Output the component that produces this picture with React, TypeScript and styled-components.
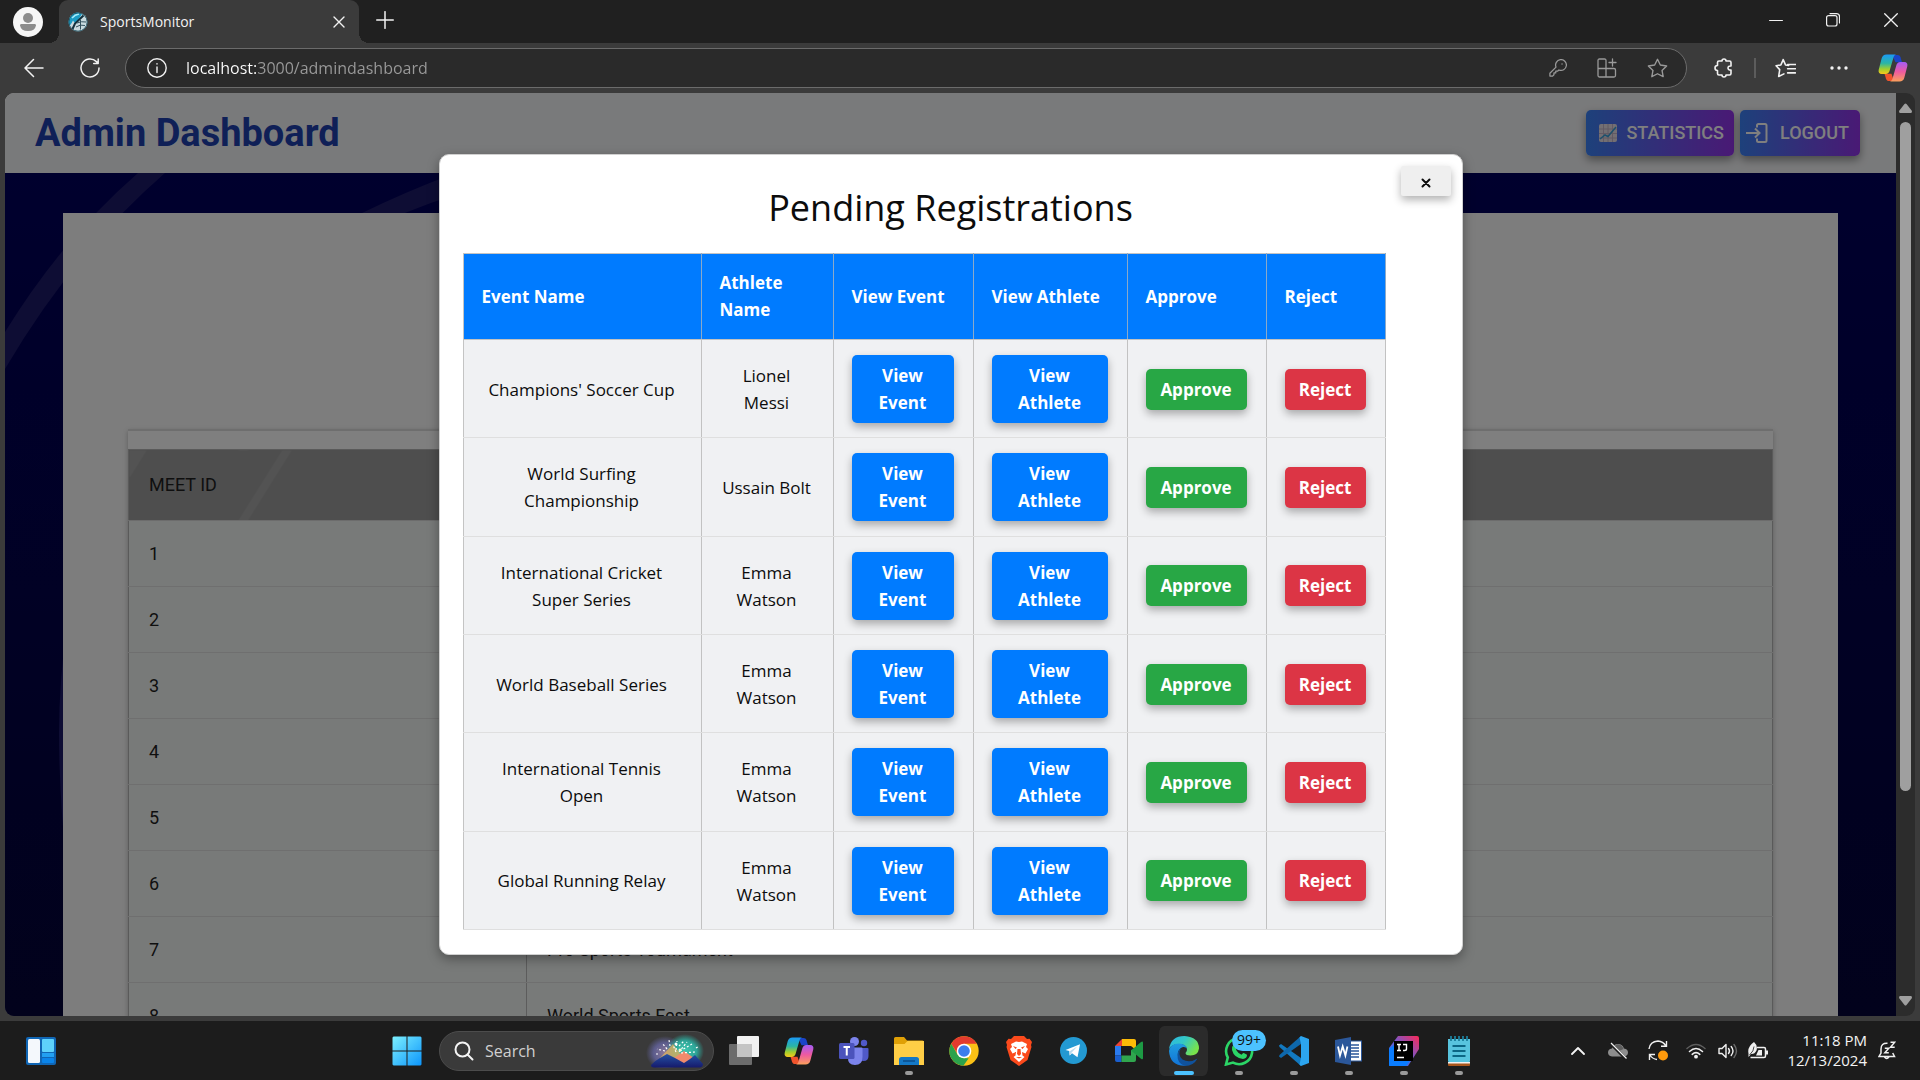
import React from "react";
import styled, { createGlobalStyle, css } from "styled-components";

const GlobalStyle = createGlobalStyle`
  *, *::before, *::after { box-sizing: border-box; }
  html, body { margin: 0; padding: 0; }
  body { background: #1c1c1c; overflow: hidden; }
  button, input { font: inherit; color: inherit; }
  svg { display: block; flex: none; }
`;

const ui = `"Open Sans", "Noto Sans", sans-serif`;
const web = `Roboto, "Liberation Sans", sans-serif`;

/* ---------- window ---------- */

const Screen = styled.div`
  display: flex;
  flex-direction: column;
  height: 100vh;
  background: #3b3b3b;
  font-family: ${ui};
`;

const bareButton = css`
  display: inline-flex;
  align-items: center;
  justify-content: center;
  padding: 0;
  border: 0;
  background: transparent;
  color: inherit;
`;

const IconButton = styled.button<{ $w?: number }>`
  ${bareButton}
  width: ${(p) => p.$w ?? 40}px;
  height: 40px;
  flex: none;
`;

const TabStrip = styled.header`
  display: flex;
  height: 43px;
  flex: none;
  background: #202020;
  color: #f2f2f2;
`;

const Profile = styled.button`
  ${bareButton}
  width: 59px;
  padding-right: 3px;
`;

const Tab = styled.div`
  position: relative;
  display: flex;
  align-items: center;
  width: 300px;
  padding: 0 0 0 9px;
  border-radius: 9px 9px 0 0;
  background: #3b3b3b;
  font-size: 14px;
  line-height: 20px;

  &::before,
  &::after {
    content: "";
    position: absolute;
    bottom: 0;
    width: 10px;
    height: 10px;
  }
  &::before {
    left: -10px;
    background: radial-gradient(circle at 0 0, transparent 10px, #3b3b3b 10px);
  }
  &::after {
    right: -10px;
    background: radial-gradient(circle at 100% 0, transparent 10px, #3b3b3b 10px);
  }
`;

const TabTitle = styled.span`
  flex: 1;
  margin-left: 12px;
`;

const WindowControls = styled.div`
  display: flex;
  margin-left: auto;
`;

const Toolbar = styled.nav`
  display: flex;
  align-items: center;
  height: 50px;
  flex: none;
  padding: 0 7px 0 6px;
  color: #f2f2f2;
`;

const AddressBar = styled.label`
  display: flex;
  align-items: center;
  flex: 1;
  height: 40px;
  margin: 0 15px 0 7px;
  padding: 0 4px 0 11px;
  border: 1px solid #6b6b6b;
  border-radius: 20px;
  background: #2a2a2a;
  color: #9a9a9a;
`;

const AddressInput = styled.input`
  flex: 1;
  min-width: 0;
  margin-left: 9px;
  padding: 0;
  border: 0;
  outline: 0;
  font-size: 16px;
  line-height: 24px;
  color: transparent;
  background: linear-gradient(to right, #ffffff 71px, #9a9a9a 71px);
  background-clip: text;
  -webkit-background-clip: text;
`;

const ToolDivider = styled.span`
  width: 2px;
  height: 20px;
  margin: 0 9px 0 8px;
  background: #5c5c5c;
`;

/* ---------- page ---------- */

const Frame = styled.div`
  display: flex;
  flex: 1;
  min-height: 0;
  margin: 0 5px 5px;
  border-radius: 9px;
  overflow: hidden;
`;

const Viewport = styled.div`
  position: relative;
  flex: 1;
  min-width: 0;
  overflow: hidden;
  font-family: ${web};
`;

const PageHeader = styled.div`
  display: flex;
  align-items: center;
  justify-content: space-between;
  height: 80px;
  padding: 0 36px 0 30px;
  background: #f3f4f6;
`;

const PageTitle = styled.h1`
  margin: 0;
  font-size: 38px;
  line-height: 40px;
  font-weight: 700;
  color: #1e40af;
`;

const HeaderActions = styled.div`
  display: flex;
  gap: 6px;
`;

const GradientButton = styled.button<{ $icon: "small" | "large" }>`
  ${bareButton}
  gap: ${(p) => (p.$icon === "large" ? 12 : 9)}px;
  height: 46px;
  padding: ${(p) => (p.$icon === "large" ? "0 11px 0 6px" : "0 10px 0 13px")};
  border-radius: 5px;
  background: linear-gradient(to right, #3b82f6, #9333ea);
  box-shadow: 0 4px 8px rgba(0, 0, 0, 0.4);
  color: #fff;
  font-size: 18px;
  font-weight: 500;
  line-height: 24px;
`;

const Stage = styled.main`
  position: relative;
  padding: 40px 58px 0;
  background: linear-gradient(#00005c, #040438 840px);
`;

const Arcs = styled.svg`
  position: absolute;
  top: 0;
  left: 0;
`;

const Panel = styled.section`
  position: relative;
  padding: 216px 65px 0;
  background: #fafafa;
`;

const Sheet = styled.div`
  padding-top: 18px;
  border-top: 2px solid #dcdcdc;
  background: #fff;
  box-shadow: 0 2px 5px rgba(0, 0, 0, 0.25);
`;

const MeetTable = styled.table`
  width: 100%;
  table-layout: fixed;
  border-collapse: collapse;
  border: 1px solid #b4b4b4;
  color: #1f1f1f;
  font-size: 18px;
  line-height: 27px;
  text-align: left;

  th, td { padding: 0 20px; }
  th {
    height: 71px;
    padding-bottom: 2px;
    border-bottom: 1px solid #d8d8d8;
    font-weight: 400;
    background: #9c9c9c;
  }
  th:first-child {
    width: 398px;
    background: linear-gradient(
      122deg,
      #a7a7a7 14px,
      #9c9c9c 15px 129px,
      #a7a7a7 130px 137px,
      #9c9c9c 138px
    );
  }
  td {
    height: 66px;
    background: #f1f4f3;
    border-bottom: 1px solid #dedede;
  }
  td + td { border-left: 1px solid #b8b8b8; }
`;

const ScrollTrack = styled.div`
  display: flex;
  flex-direction: column;
  align-items: center;
  width: 19px;
  flex: none;
  padding: 10px 0;
  background: #2c2c2c;
`;

const ScrollLane = styled.div`
  flex: 1;
  width: 11px;
  margin: 9px 0 5px;
`;

const ScrollThumb = styled.div`
  height: 77%;
  border-radius: 6px;
  background: #9f9f9f;
`;

/* ---------- modal ---------- */

const Backdrop = styled.div`
  position: absolute;
  inset: 0;
  display: flex;
  align-items: center;
  justify-content: center;
  background: rgba(0, 0, 0, 0.5);
  font-family: ${ui};
`;

const Dialog = styled.div`
  position: relative;
  display: flex;
  flex-direction: column;
  width: min(1024px, 90%);
  max-height: calc(100% - 122px);
  padding: 24px 23px;
  border: 1px solid #d0d0d0;
  border-radius: 10px;
  background: #fff;
  box-shadow: 0 4px 12px rgba(0, 0, 0, 0.35);
  color: #0c0c0c;
`;

const CloseButton = styled.button`
  ${bareButton}
  position: absolute;
  top: 11px;
  right: 11px;
  width: 50px;
  height: 30px;
  padding-top: 4px;
  border-radius: 2px;
  background: #efefef;
  box-shadow: 0 4px 8px rgba(0, 0, 0, 0.3);
`;

const DialogTitle = styled.h2`
  margin: 0 0 16px;
  font-size: 36px;
  line-height: 58px;
  font-weight: 400;
  text-align: center;
`;

const TableScroll = styled.div`
  overflow: hidden;
`;

const RegTable = styled.table`
  width: 922px;
  height: 677px;
  table-layout: fixed;
  border-collapse: collapse;
  border: 1px solid #c4c4c4;
  font-size: 17px;
  line-height: 27px;

  th, td { border-right: 1px solid #c2c2c2; }
  th {
    padding: 15px 18px 16px;
    background: #007bff;
    color: #fff;
    font-weight: 700;
    text-align: left;
    border-right-color: #8aa9c9;
    border-bottom: 1px solid #c2c2c2;
  }
  td {
    padding: 15px 19px 14px 18px;
    background: #f0f1f3;
    text-align: center;
    border-bottom: 1px solid #dfdfdf;
  }
`;

const tones = { blue: "#007bff", green: "#28a745", red: "#dc3545" };

const ActionButton = styled.button<{ $tone: keyof typeof tones }>`
  display: block;
  width: 100%;
  padding: 7px 12px;
  border: 0;
  border-radius: 5px;
  background: ${(p) => tones[p.$tone]};
  box-shadow: 0 4px 8px rgba(0, 0, 0, 0.3);
  color: #fff;
  font-weight: 700;
  line-height: 27px;
`;

/* ---------- taskbar ---------- */

const Taskbar = styled.footer`
  display: grid;
  grid-template-columns: 1fr auto 1fr;
  align-items: center;
  height: 59px;
  flex: none;
  background: #1c1c1c;
  color: #f4f4f4;
`;

const TaskLeft = styled.div`
  padding-left: 21px;
`;

const TaskCenter = styled.div`
  display: flex;
  align-items: center;
  padding-right: 55px;
`;

const TaskButton = styled.button<{ $state?: "open" | "active" }>`
  ${bareButton}
  position: relative;
  width: 55px;
  height: 50px;
  border: 3px solid transparent;
  border-width: 0 3px;
  border-radius: 8px;
  background-clip: padding-box;
  ${(p) => p.$state === "active" && css`background-color: #2b2b2b;`}
  ${(p) =>
    p.$state &&
    css`
      &::after {
        content: "";
        position: absolute;
        bottom: 1px;
        left: 50%;
        width: ${p.$state === "active" ? 20 : 8}px;
        height: 4px;
        border-radius: 2px;
        background: ${p.$state === "active" ? "#4cc2ff" : "#9a9a9a"};
        transform: translateX(-50%);
      }
    `}
`;

const SearchBox = styled.label`
  display: flex;
  align-items: center;
  width: 275px;
  height: 40px;
  margin: 0 2px 0 5px;
  padding: 0 9px 0 14px;
  border: 1px solid #4c4c4c;
  border-radius: 20px;
  background: #3a3a3a;
`;

const SearchInput = styled.input`
  flex: 1;
  min-width: 0;
  margin-left: 11px;
  padding: 0;
  border: 0;
  outline: 0;
  background: transparent;
  font-size: 16px;
  line-height: 24px;
  &::placeholder { color: #d0d0d0; opacity: 1; }
`;

const Badge = styled.span`
  position: absolute;
  top: 4px;
  left: 18px;
  width: 34px;
  height: 21px;
  border-radius: 11px;
  background: #4cc2ff;
  color: #101010;
  font-size: 14px;
  line-height: 20px;
  text-align: center;
`;

const Tray = styled.div`
  display: flex;
  align-items: center;
  justify-content: flex-end;
  padding-right: 21px;
`;

const TrayButton = styled.button<{ $w: number }>`
  ${bareButton}
  width: ${(p) => p.$w}px;
  height: 40px;
  flex: none;
`;

const Clock = styled.time`
  margin: 0 8px 0 12px;
  padding-bottom: 2px;
  font-size: 15px;
  line-height: 20px;
  text-align: right;
  white-space: nowrap;
`;

/* ---------- drawings ---------- */

type LineProps = { size?: number; w?: number; children: React.ReactNode; box?: number };
const Line = ({ size = 20, w = 1.4, box = 20, children }: LineProps) => (
  <svg width={size} height={size} viewBox={`0 0 ${box} ${box}`} fill="none" stroke="currentColor" strokeWidth={w} strokeLinecap="round" strokeLinejoin="round" aria-hidden="true">
    {children}
  </svg>
);

const Copilot = ({ id }: { id: string }) => (
  <svg width="30" height="30" viewBox="0 0 30 30" aria-hidden="true">
    <defs>
      <linearGradient id={id + "a"} x1="0" y1="0" x2="0" y2="1">
        <stop offset="0" stopColor="#1b9af5" /><stop offset=".45" stopColor="#2bb5a5" />
        <stop offset=".75" stopColor="#a3cf2c" /><stop offset="1" stopColor="#f8c81c" />
      </linearGradient>
      <linearGradient id={id + "b"} x1="0" y1="0" x2="0" y2="1">
        <stop offset="0" stopColor="#a45cf5" /><stop offset=".5" stopColor="#ee5aa0" /><stop offset="1" stopColor="#fba05c" />
      </linearGradient>
    </defs>
    <path d="M14 2h5.500c1.500 0 2.500.9 3 2.300l1.500 5h-6.500z" fill="#1a44c8" />
    <path d="M16 28h-5c-1.500 0-2.500-.9-3-2.300l-1.500-5h7z" fill="#f0542c" />
    <path d="M8.500 1.500h9.500c-1.500.5-2.200 1.800-2.700 3.600l-3.600 12.400c-.6 2.200-1.900 3.500-4 3.500h-4c-2.400 0-3.600-1.800-3-4.200l3-11.500c.7-2.500 2.200-3.800 4.800-3.800z" fill={`url(#${id}a)`} />
    <path d="M21.500 28.500h-9.500c1.500-.5 2.200-1.800 2.700-3.600l3.600-12.400c.6-2.200 1.900-3.500 4-3.500h4c2.400 0 3.600 1.800 3 4.200l-3 11.500c-.7 2.500-2.200 3.800-4.800 3.800z" fill={`url(#${id}b)`} />
  </svg>
);

const Favicon = () => (
  <svg width="20" height="20" viewBox="0 0 20 20" aria-hidden="true">
    <circle cx="10" cy="10" r="9.500" fill="#c9dade" />
    <path d="M10 .5A9.500 9.500 0 0 0 1.500 14Q4 11 5 8.500L7.500 12 14 2z" fill="#1d9cc4" />
    <path d="M4 6q3-3.500 7-4" stroke="#a6ecfb" strokeWidth="1.500" fill="none" />
    <path d="M4.500 17L7 11.500 15.500 3.500" stroke="#12303c" strokeWidth="2" fill="none" />
    <path d="M9 11q4-2 9-1M8 15q4-3 9-1.500M12.500 8v9.500" stroke="#34525e" strokeWidth="1" fill="none" />
    <circle cx="10" cy="10" r="9.200" fill="none" stroke="#18495a" strokeWidth=".9" />
  </svg>
);

const ChartIcon = () => (
  <svg width="18" height="18" viewBox="0 0 18 18" aria-hidden="true">
    <rect width="18" height="18" rx="2" fill="#e6dfe6" />
    <path d="M0 5h18M0 9.500h18M0 14h18M4.500 0v18M9 0v18M13.500 0v18" stroke="#c0b0c4" strokeWidth=".9" />
    <path d="M1 15l5-4 3 1.500L17 3" stroke="#3aa0d8" strokeWidth="1.500" fill="none" />
  </svg>
);

const LoginIcon = () => (
  <svg width="22" height="22" viewBox="0 0 22 22" fill="none" stroke="currentColor" strokeWidth="2" aria-hidden="true">
    <path d="M11 5.500V3.500q0-1.500 1.500-1.500H19q1.500 0 1.500 1.500v15q0 1.500-1.500 1.500h-6.500q-1.500 0-1.500-1.500v-2" />
    <path d="M0 11h13.500M9 6.500l4.500 4.500L9 15.500" />
  </svg>
);

const WidgetsIcon = () => (
  <svg width="30" height="28" viewBox="0 0 30 28" aria-hidden="true">
    <rect width="30" height="28" rx="2" fill="#1066b5" />
    <rect x="2" y="2" width="12" height="24" rx="1.500" fill="#f4f8fc" />
    <rect x="16" y="2" width="12" height="13" rx="1" fill="#5ed2fb" />
    <rect x="16" y="16" width="12" height="4" fill="#22a0f2" />
    <rect x="16" y="21" width="12" height="5" rx="1" fill="#0a84ea" />
  </svg>
);

const StartIcon = () => (
  <svg width="30" height="30" viewBox="0 0 30 30" aria-hidden="true">
    <defs>
      <linearGradient id="win" x1="0" y1="0" x2="1" y2="1">
        <stop offset="0" stopColor="#7cf0ff" /><stop offset="1" stopColor="#0c95fb" />
      </linearGradient>
    </defs>
    <path fill="url(#win)" d="M1.500.5H14.500V14.500H.5V1.500zM15.500.5H28.500l1 1V14.500H15.500zM.5 15.500H14.500V29.500H1.500l-1-1zM15.500 15.500H29.500V28.500l-1 1H15.500z" />
  </svg>
);

const SearchArt = () => (
  <svg width="58" height="34" viewBox="0 0 58 34" aria-hidden="true">
    <defs>
      <radialGradient id="g1"><stop offset="0" stopColor="#8d7a9c" /><stop offset=".6" stopColor="#5c5c8c" /><stop offset="1" stopColor="#5c5c8c" stopOpacity="0" /></radialGradient>
      <radialGradient id="g2"><stop offset="0" stopColor="#3fc7b0" /><stop offset=".6" stopColor="#2ea598" /><stop offset="1" stopColor="#2ea598" stopOpacity="0" /></radialGradient>
      <linearGradient id="g3" x1="0" y1="0" x2="0" y2="1"><stop offset="0" stopColor="#2452a4" /><stop offset="1" stopColor="#161a6c" /></linearGradient>
    </defs>
    <ellipse cx="19" cy="19" rx="19" ry="17" fill="url(#g1)" />
    <ellipse cx="39" cy="17" rx="19" ry="17" fill="url(#g2)" />
    <path d="M14 24l13-14 12 16z" fill="#d9b060" opacity=".8" />
    <path d="M28 24l10-7 10 7-10 8z" fill="#f08a6c" />
    <path d="M5 31q5-5 9-7l7-4 8 4 9 5 6-4 5-4 8 9q0 3-3 3.500H8q-3 0-3-2.500z" fill="url(#g3)" />
    <path d="M21 15l-5-6M19 17l-8-2M24 12l-1-6M30 16l1-9M33 12l5-5M34 17l12-7M35 19l14-1M30 18l-3-7M33 18l8-10M12 20h-3M50 14l3-2" stroke="#fff" strokeWidth="1.200" strokeDasharray="2 2" />
    <circle cx="30" cy="10" r="1.500" fill="#fff" /><circle cx="34" cy="16" r="1.500" fill="#fff8d0" />
  </svg>
);

const TaskViewIcon = () => (
  <svg width="30" height="30" viewBox="0 0 30 30" aria-hidden="true">
    <rect x="0" y="8" width="23" height="21" rx="1" fill="#6c6c6c" />
    <rect x="8" y="0" width="22" height="21" rx="1" fill="#f2f2f2" />
    <rect x="8" y="8" width="15" height="13" fill="#c4c4c4" />
  </svg>
);

const TeamsIcon = () => (
  <svg width="30" height="28" viewBox="0 0 30 28" aria-hidden="true">
    <circle cx="25" cy="6" r="3.200" fill="#5059c9" /><circle cx="15.500" cy="4.500" r="4.500" fill="#7b83eb" />
    <path d="M21 11h7.500q1 0 1 1v7q0 5-5 5-2 0-3.500-1z" fill="#5059c9" />
    <path d="M9 10.500h13.500q1 0 1 1V20q0 8-7.500 8t-7-8z" fill="#7b83eb" />
    <rect y="6" width="15.500" height="16" rx="1.500" fill="#4b53bc" />
    <path d="M4.500 10h6.500M7.750 10v8.500" stroke="#fff" strokeWidth="2" />
  </svg>
);

const FolderIcon = () => (
  <svg width="30" height="28" viewBox="0 0 30 28" aria-hidden="true">
    <path d="M0 1.500Q0 0 1.500 0H10l3 3.500h15.500Q30 3.500 30 5v8H0z" fill="#e0a006" />
    <path d="M0 7h10.500L13.500 4H30v24H0z" fill="#ffce46" />
    <path d="M5 28v-5.500Q5 20 7.500 20h15q2.500 0 2.500 2.500V28z" fill="#1478c6" />
    <path d="M9 24h12" stroke="#0a4c8a" strokeWidth="1.500" />
  </svg>
);

const ChromeIcon = () => (
  <svg width="30" height="30" viewBox="0 0 48 48" aria-hidden="true">
    <circle cx="24" cy="24" r="23.500" fill="#fbc116" />
    <path d="M3.600 12.300A23.500 23.500 0 0 1 44.400 12.300H24L13 27z" fill="#e33b2e" />
    <path d="M3.600 12.300L13.800 30 24 35.700h7.500L23 47.500A23.500 23.500 0 0 1 3.600 12.300z" fill="#2ba24c" />
    <circle cx="24" cy="24" r="11.700" fill="#fff" /><circle cx="24" cy="24" r="9.300" fill="#3b7ded" />
  </svg>
);

const BraveIcon = () => (
  <svg width="26" height="30" viewBox="0 0 26 30" aria-hidden="true">
    <path d="M8 0h10l3 3 2.500-.3L26 6l-1 3 .5 2-4 13-8.500 6-8.500-6L.5 11 1 9 0 6l2.500-3.300L5 3z" fill="#fb4a1c" />
    <path d="M13 6l3-.6 5 2.600-1 3 2 2-2.500 4.500L16 16l.5 3.500 2 1.500-5.500 5-5.500-5 2-1.500L10 16l-3.500 1.500L4 13l2-2-1-3 5-2.600z" fill="#fff" />
    <path d="M7 10l4 1.500-1.500 1.500zM19 10l-4 1.500 1.500 1.500zM11.500 13h3l.5 5-2 2-2-2zM10 21l3 1.500 3-1.500" fill="#fb4a1c" />
  </svg>
);

const TelegramIcon = () => (
  <svg width="27" height="27" viewBox="0 0 27 27" aria-hidden="true">
    <circle cx="13.500" cy="13.500" r="13.500" fill="#2399d2" />
    <path d="M5.500 13L20 7.300l-2.500 13-5.500-4-2.300 2.200-.5-4.500z" fill="#fff" />
    <path d="M9.300 14.500l8-5-5.600 6-2 3z" fill="#b9dbee" />
  </svg>
);

const MeetIcon = () => (
  <svg width="28" height="23" viewBox="0 0 28 23" aria-hidden="true">
    <path d="M0 7l7-7v7z" fill="#e94335" /><path d="M7 0h12q2 0 2 2v9l-5-4H7z" fill="#fcbc07" />
    <path d="M0 7h6v9.500H0z" fill="#2a7bf0" /><path d="M0 16.500h6.500V23H2q-2 0-2-2z" fill="#1a5fd0" />
    <path d="M6.500 16.500H16V11l5-1v11q0 2-2 2H6.500z" fill="#30a64e" />
    <path d="M16 11.500l10-8.500q2-1.300 2 .8V19q0 2.200-2 .8z" fill="#1d9a44" />
  </svg>
);

const EdgeIcon = () => (
  <svg width="30" height="30" viewBox="0 0 30 30" aria-hidden="true">
    <defs>
      <linearGradient id="e1" x1="0" y1="0" x2="1" y2=".5"><stop offset="0" stopColor="#2ab4e8" /><stop offset=".5" stopColor="#34c8c4" /><stop offset="1" stopColor="#78e24c" /></linearGradient>
      <linearGradient id="e2" x1="0" y1="0" x2="0" y2="1"><stop offset="0" stopColor="#1f9de0" /><stop offset="1" stopColor="#1273d6" /></linearGradient>
    </defs>
    <path d="M0 13Q2 0 15.500 0 30 1 30 12.500q-1 7-8.500 7-5 0-5-2.500 1.800-1.500 1.500-4Q17 8 10 8 3 8 0 13z" fill="url(#e1)" />
    <path d="M0 15Q1 7.500 10 7.500q7 .5 8 5-1.500-2-4-1.500-6 2-5 9 1 7 8 9.600Q1 30.500 0 15z" fill="url(#e2)" />
    <path d="M12 12q-4 7 1.500 11.500 7 4 15-1-4 7.500-12.500 7.500Q8 27.500 8.500 19q.5-5 3.500-7z" fill="#10529c" />
  </svg>
);

const WhatsappIcon = () => (
  <svg width="30" height="30" viewBox="0 0 30 30" aria-hidden="true">
    <path d="M2 28.500l1.800-7A13 13 0 1 1 9 26.600z" fill="none" stroke="#2bd566" strokeWidth="2.600" />
    <path d="M9.500 8.500q1.500-2 2.800.5l1 2.500q0 1-1.300 2.300 2 3.500 5.500 5 1.500-2 2.300-1.700l3.200 1.600q0 3.800-4 4.300-9-1-11-9-.3-3.500 1.500-5.500z" fill="#2bd566" />
  </svg>
);

const CodeIcon = () => (
  <svg width="30" height="30" viewBox="0 0 30 30" aria-hidden="true">
    <path d="M0 9.500L2 8l20 14v8L.5 11z" fill="#1279c0" /><path d="M0 20.500L2 22 22 8V0L.5 19z" fill="#0e68ac" />
    <path d="M22 0l8 3v24l-8 3-1.500-1.500L22 22V8l-1.500-6.500z" fill="#2ca5ef" />
  </svg>
);

const WordIcon = () => (
  <svg width="27" height="28" viewBox="0 0 27 28" aria-hidden="true">
    <rect x="14" y="4" width="12.500" height="20" fill="#fff" stroke="#2b579a" />
    <path d="M16 8h8M16 11h8M16 14h8M16 17h8M16 20h8" stroke="#2b579a" strokeWidth="1.500" />
    <path d="M0 3l16-3v28L0 25z" fill="#2b579a" />
    <path d="M3 9.500l2 9 2.700-9 2.700 9 2-9" fill="none" stroke="#fff" strokeWidth="1.800" />
  </svg>
);

const IdeaIcon = () => (
  <svg width="30" height="32" viewBox="0 0 30 32" aria-hidden="true">
    <defs><linearGradient id="ij" x1="0" y1="1" x2="1" y2="0"><stop offset="0" stopColor="#087cfa" /><stop offset=".5" stopColor="#6f5bd0" /><stop offset="1" stopColor="#fe2857" /></linearGradient></defs>
    <path d="M9 1h19q2 0 2 2v11L19 31H1q-1 0-1-1V13z" fill="url(#ij)" />
    <path d="M0 14l5-4v16h16l-4 5H1q-1 0-1-1z" fill="#0a7dff" />
    <rect x="5" y="6" width="19" height="20" fill="#000" />
    <path d="M8 9.500h4M10 9.500v6M8 15.500h4M14 9.500h3.500v4.500q0 1.500-2 1.500H14M8 22.500h7" stroke="#fff" strokeWidth="1.400" fill="none" />
  </svg>
);

const NotepadIcon = () => (
  <svg width="24" height="32" viewBox="0 0 24 32" aria-hidden="true">
    <rect x="1" y="27" width="22" height="4" rx="1" fill="#a8561c" />
    <path d="M1 4h22v22l-1 2H2l-1-2z" fill="#58c4de" /><path d="M1 27h22v1.500H1z" fill="#f1f1f1" />
    <path d="M4 1v5M8 1v5M12 1v5M16 1v5M20 1v5" stroke="#1c7f9c" strokeWidth="1.800" />
    <path d="M5.500 11h13M5.500 16h13M5.500 21h13" stroke="#0c6684" strokeWidth="2" />
  </svg>
);

/* ---------- data ---------- */

const meets = ["", "", "", "", "", "", "Pro Sports Tournament", "World Sports Fest"];

const registrations = [
  { event: "Champions' Soccer Cup", athlete: "Lionel Messi" },
  { event: "World Surfing Championship", athlete: "Ussain Bolt" },
  { event: "International Cricket Super Series", athlete: "Emma Watson" },
  { event: "World Baseball Series", athlete: "Emma Watson" },
  { event: "International Tennis Open", athlete: "Emma Watson" },
  { event: "Global Running Relay", athlete: "Emma Watson" },
];

const columns = [
  { label: "Event Name", width: 238 },
  { label: "Athlete Name", width: 132 },
  { label: "View Event", width: 140 },
  { label: "View Athlete", width: 154 },
  { label: "Approve", width: 139 },
  { label: "Reject", width: 119 },
];

const apps: { name: string; icon: React.ReactNode; state?: "open" | "active"; badge?: string }[] = [
  { name: "Task view", icon: <TaskViewIcon /> },
  { name: "Copilot", icon: <Copilot id="tb" /> },
  { name: "Teams", icon: <TeamsIcon /> },
  { name: "File Explorer", icon: <FolderIcon />, state: "open" },
  { name: "Chrome", icon: <ChromeIcon /> },
  { name: "Brave", icon: <BraveIcon /> },
  { name: "Telegram", icon: <TelegramIcon /> },
  { name: "Meet", icon: <MeetIcon /> },
  { name: "Edge", icon: <EdgeIcon />, state: "active" },
  { name: "WhatsApp", icon: <WhatsappIcon />, state: "open", badge: "99+" },
  { name: "Visual Studio Code", icon: <CodeIcon />, state: "open" },
  { name: "Word", icon: <WordIcon />, state: "open" },
  { name: "IntelliJ IDEA", icon: <IdeaIcon />, state: "open" },
  { name: "Notepad", icon: <NotepadIcon />, state: "open" },
];

/* ---------- sections ---------- */

const starPath = "M10 1.200l2.700 5.500 6 .9-4.400 4.200 1.100 6L10 15l-5.400 2.800 1.100-6L1.300 7.600l6-.9z";

function BrowserChrome() {
  return (
    <>
      <TabStrip>
        <Profile aria-label="Profile">
          <svg width="30" height="30" viewBox="0 0 30 30" aria-hidden="true">
            <circle cx="15" cy="15" r="15" fill="#f6f6f6" />
            <circle cx="15" cy="11" r="5" fill="#8c8c8c" />
            <path d="M8 17h14q1 0 1 1.500Q22 24 15 24t-8-5.500Q7 17 8 17z" fill="#8c8c8c" />
          </svg>
        </Profile>
        <Tab>
          <Favicon />
          <TabTitle>SportsMonitor</TabTitle>
          <IconButton aria-label="Close tab"><Line size={12} box={12} w={1.4}><path d="M1 1l10 10M11 1L1 11" /></Line></IconButton>
        </Tab>
        <IconButton $w={52} aria-label="New tab"><Line size={18} box={18} w={1.5}><path d="M9 .7v16.600M.7 9h16.600" /></Line></IconButton>
        <WindowControls>
          <IconButton $w={57} aria-label="Minimize"><Line size={14} box={14} w={1.2}><path d="M.6 7.500h12.800" /></Line></IconButton>
          <IconButton $w={58} aria-label="Restore"><Line size={14} box={14} w={1.2}><path d="M2.500 2.600h6.500q2 0 2 2V11q0 2-2 2H2.600q-2 0-2-2V4.600q0-2 2-2zM4 .6h6.500q3 0 3 3V10" /></Line></IconButton>
          <IconButton $w={58} aria-label="Close"><Line size={14} box={14} w={1.3}><path d="M.7.7l12.600 12.600M13.300.7L.7 13.300" /></Line></IconButton>
        </WindowControls>
      </TabStrip>
      <Toolbar>
        <IconButton $w={56} aria-label="Back"><Line size={20} w={1.5}><path d="M19 10H1.200M9.500 1.500L1 10l8.500 8.500" /></Line></IconButton>
        <IconButton $w={56} aria-label="Refresh"><Line size={20} w={1.5}><path d="M19 10a9 9 0 1 1-2.600-6.400L18 5.200M18.200 1v4.500h-4.500" /></Line></IconButton>
        <AddressBar>
          <IconButton aria-label="Site information"><Line size={20} w={1.4}><g stroke="#f2f2f2"><circle cx="10" cy="10" r="9.200" /><path d="M10 9v5.500M10 5.600v.4" /></g></Line></IconButton>
          <AddressInput aria-label="Address" readOnly value="localhost:3000/admindashboard" />
          <IconButton $w={48} aria-label="Passwords"><Line size={18} w={1.4}><path d="M7.800 9A6 6 0 1 1 11 12.200L9.500 13.500H7.500v2h-2v2L4 19H1v-3.200z" /><circle cx="14.500" cy="5.500" r=".8" fill="currentColor" stroke="none" /></Line></IconButton>
          <IconButton $w={50} aria-label="Apps"><Line size={20} w={1.3}><path d="M9 10.500V2.500q0-1.500-1.500-1.500H2.500Q1 1 1 2.500V17.500Q1 19 2.500 19H17q1.500 0 1.500-1.500V12q0-1.500-1.500-1.500H1M9 10.500V19M15.500 1v7M12 4.500h7" /></Line></IconButton>
          <IconButton $w={50} aria-label="Add to favorites"><Line size={21} w={1.3}><path d={starPath} /></Line></IconButton>
        </AddressBar>
        <IconButton $w={44} aria-label="Extensions"><Line size={20} w={1.6}><path d="M5 3h3q0-2 2-2t2 2h3.500q1.500 0 1.500 1.500V8q-3-.2-3 2t3 2v3.500q0 1.500-1.500 1.500H12q0 2-2 2t-2-2H5q-1.500 0-1.500-1.500V12.500Q1 12.500 1 10t2.500-2.500v-3Q3.500 3 5 3z" /></Line></IconButton>
        <ToolDivider />
        <IconButton $w={40} aria-label="Favorites"><Line size={21} w={1.5}><path d="M13 7L10 6.600 7.800 1.500 5.600 6.600 1 7.300l3.500 3.800-1 6.500 5-2.500M12 6.200h7.500M12 10.200h7.500M12 14.200h7.500" /></Line></IconButton>
        <IconButton $w={68} aria-label="Settings and more"><svg width="18" height="4" viewBox="0 0 18 4" aria-hidden="true"><g fill="#f2f2f2"><circle cx="2" cy="2" r="1.700" /><circle cx="9" cy="2" r="1.700" /><circle cx="16" cy="2" r="1.700" /></g></svg></IconButton>
        <IconButton aria-label="Copilot"><Copilot id="ed" /></IconButton>
      </Toolbar>
    </>
  );
}

function Dashboard() {
  return (
    <>
      <PageHeader>
        <PageTitle>Admin Dashboard</PageTitle>
        <HeaderActions>
          <GradientButton $icon="small"><ChartIcon />STATISTICS</GradientButton>
          <GradientButton $icon="large"><LoginIcon />LOGOUT</GradientButton>
        </HeaderActions>
      </PageHeader>
      <Stage>
        <Arcs width="520" height="800" viewBox="0 0 520 800" aria-hidden="true">
          <g fill="#1c1a68">
            <path d="M133 0Q58 65 0 159V196Q68 80 160 0z" />
            <path d="M357 40Q400 19 450 0V22Q430 28 400 40z" />
            <path d="M62 450Q54 510 54 560Q54 620 62 700z" />
          </g>
        </Arcs>
        <Panel>
          <Sheet>
            <MeetTable>
              <thead><tr><th scope="col">MEET ID</th><th scope="col" /></tr></thead>
              <tbody>
                {meets.map((name, i) => (
                  <tr key={i}><td>{i + 1}</td><td>{name}</td></tr>
                ))}
              </tbody>
            </MeetTable>
          </Sheet>
        </Panel>
      </Stage>
    </>
  );
}

function PendingRegistrations() {
  return (
    <Backdrop>
      <Dialog role="dialog" aria-modal="true" aria-labelledby="pending-title">
        <CloseButton aria-label="Close"><Line size={10} box={10} w={2}><path d="M1.500 1.500l7 7M8.500 1.500l-7 7" /></Line></CloseButton>
        <DialogTitle id="pending-title">Pending Registrations</DialogTitle>
        <TableScroll>
          <RegTable>
            <colgroup>
              {columns.map((c) => <col key={c.label} width={c.width} />)}
            </colgroup>
            <thead>
              <tr>{columns.map((c) => <th key={c.label} scope="col">{c.label}</th>)}</tr>
            </thead>
            <tbody>
              {registrations.map((r) => (
                <tr key={r.event}>
                  <td>{r.event}</td>
                  <td>{r.athlete}</td>
                  <td><ActionButton $tone="blue">View Event</ActionButton></td>
                  <td><ActionButton $tone="blue">View Athlete</ActionButton></td>
                  <td><ActionButton $tone="green">Approve</ActionButton></td>
                  <td><ActionButton $tone="red">Reject</ActionButton></td>
                </tr>
              ))}
            </tbody>
          </RegTable>
        </TableScroll>
      </Dialog>
    </Backdrop>
  );
}

function SystemTray() {
  return (
    <Tray>
      <TrayButton $w={40} aria-label="Show hidden icons"><Line size={14} box={14} w={1.8}><path d="M1 10l6-6 6 6" /></Line></TrayButton>
      <TrayButton $w={40} aria-label="OneDrive">
        <svg width="20" height="18" viewBox="0 0 20 18" aria-hidden="true"><path d="M4 14.500q-4-.5-4-4t4-4Q5.500 2 10 2t6 4.500q4 .5 4 4t-4 4z" fill="#8d8d8d" /><path d="M9 2.200q5 0 6.500 4.800L11 9 5.500 5z" fill="#5e5e5e" /><path d="M2.500 1.500l15.500 15.500" stroke="#1c1c1c" strokeWidth="3" /><path d="M3 1l15.500 15.500" stroke="#f0f0f0" strokeWidth="1.300" /></svg>
      </TrayButton>
      <TrayButton $w={40} aria-label="Windows Update">
        <svg width="20" height="21" viewBox="0 0 20 21" aria-hidden="true"><path d="M1 9Q2 1.500 10 1q5 .3 8 5M18.500 1v5.200H13M1.500 20v-5.500H7M2 15q2.500 4 7 4.500" stroke="#f0f0f0" strokeWidth="1.400" fill="none" /><circle cx="15" cy="15.500" r="5" fill="#ff9a0c" /></svg>
      </TrayButton>
      <TrayButton $w={36} aria-label="Network">
        <svg width="20" height="16" viewBox="0 0 20 16" fill="none" strokeLinecap="round" aria-hidden="true"><path d="M1 5.500Q10-2.500 19 5.500" stroke="#5e5e5e" strokeWidth="1.500" /><path d="M3.500 8.500q6.500-6 13 0M6.200 11.300q3.800-3.400 7.600 0" stroke="#f0f0f0" strokeWidth="1.600" /><circle cx="10" cy="13.700" r="1.900" fill="#f0f0f0" /></svg>
      </TrayButton>
      <TrayButton $w={27} aria-label="Volume">
        <svg width="20" height="16" viewBox="0 0 20 16" fill="none" strokeLinecap="round" strokeLinejoin="round" aria-hidden="true"><path d="M1 5.500h3L8 1.500v13l-4-4H1zM10.500 5.500q2 2.500 0 5M13.200 3.500q3.600 4.500 0 9" stroke="#f0f0f0" strokeWidth="1.400" /><path d="M16 1.500q5 6.500 0 13" stroke="#6a6a6a" strokeWidth="1.400" /></svg>
      </TrayButton>
      <TrayButton $w={34} aria-label="Battery">
        <svg width="20" height="18" viewBox="0 0 20 18" aria-hidden="true"><path d="M9 5.500h7q1.500 0 1.500 1.500v7q0 1.500-1.500 1.500H2.500" stroke="#f0f0f0" strokeWidth="1.500" fill="none" /><path d="M10.500 8H14v5.500H8zM18 8.500h2v4h-2z" fill="#f0f0f0" /><path d="M6 0q4 3.500 2.500 8.500-2 4-5.500 3.500L.5 15v-3.500Q-1 5 6 0z" fill="#f0f0f0" /><path d="M6 4.500Q6 9 1.500 13" stroke="#1c1c1c" strokeWidth=".8" fill="none" /></svg>
      </TrayButton>
      <Clock dateTime="2024-12-13T23:18">11:18 PM<br />12/13/2024</Clock>
      <TrayButton $w={24} aria-label="Notifications">
        <svg width="18" height="19" viewBox="0 0 18 19" fill="none" stroke="#f0f0f0" strokeWidth="1.500" aria-hidden="true"><path d="M9.500 2.200Q3 1.800 3 8v4L1 15.500h15.500l-1.800-3.500M6.500 16q2.200 2.800 4.400 0M6.800 7.200h4l-4 4.600h4M12.500 1.200h4.200l-4.200 5h4.200" /></svg>
      </TrayButton>
    </Tray>
  );
}

export default function App() {
  return (
    <Screen>
      <GlobalStyle />
      <BrowserChrome />
      <Frame>
        <Viewport>
          <Dashboard />
          <PendingRegistrations />
        </Viewport>
        <ScrollTrack>
          <svg width="13" height="10" viewBox="0 0 13 10" aria-hidden="true"><path d="M5.500 1q1-1 2 0L13 8q0 2-1 2H1q-1 0-1-2z" fill="#9f9f9f" /></svg>
          <ScrollLane><ScrollThumb /></ScrollLane>
          <svg width="13" height="10" viewBox="0 0 13 10" aria-hidden="true"><path d="M5.500 9q1 1 2 0L13 2q0-2-1-2H1Q0 0 0 2z" fill="#9f9f9f" /></svg>
        </ScrollTrack>
      </Frame>
      <Taskbar>
        <TaskLeft><IconButton aria-label="Widgets"><WidgetsIcon /></IconButton></TaskLeft>
        <TaskCenter>
          <TaskButton aria-label="Start"><StartIcon /></TaskButton>
          <SearchBox>
            <Line size={20} w={2}><circle cx="8.500" cy="8.500" r="7" /><path d="M13.500 13.500l5 5" /></Line>
            <SearchInput aria-label="Search" placeholder="Search" />
            <SearchArt />
          </SearchBox>
          {apps.map((a) => (
            <TaskButton key={a.name} aria-label={a.name} $state={a.state}>
              {a.icon}
              {a.badge && <Badge>{a.badge}</Badge>}
            </TaskButton>
          ))}
        </TaskCenter>
        <SystemTray />
      </Taskbar>
    </Screen>
  );
}
